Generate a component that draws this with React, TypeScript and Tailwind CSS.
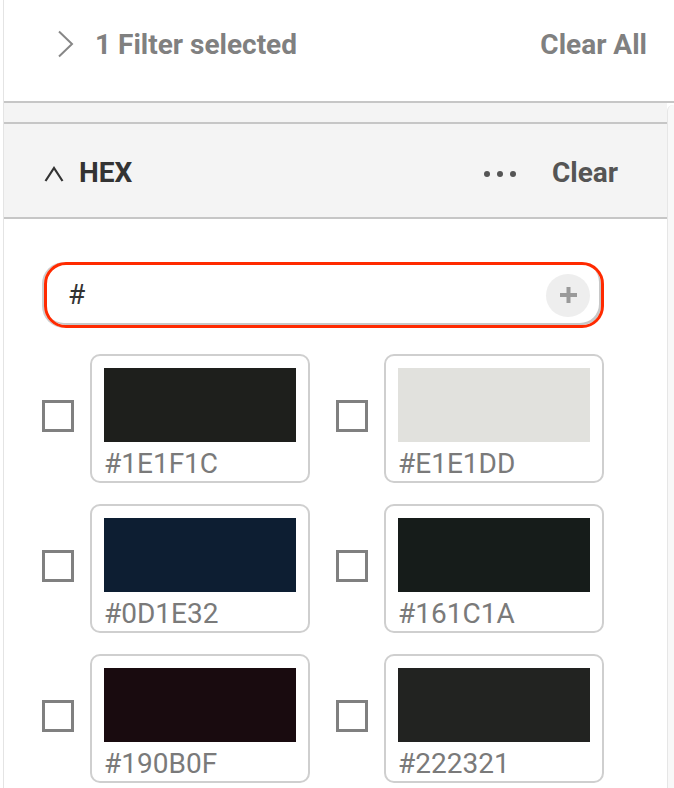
import React from 'react'

const SWATCHES = ['#1E1F1C', '#E1E1DD', '#0D1E32', '#161C1A', '#190B0F', '#222321']

const SWATCH_BG: Record<string, string> = {
  '#1E1F1C': 'bg-[#1E1F1C]',
  '#E1E1DD': 'bg-[#E1E1DD]',
  '#0D1E32': 'bg-[#0D1E32]',
  '#161C1A': 'bg-[#161C1A]',
  '#190B0F': 'bg-[#190B0F]',
  '#222321': 'bg-[#222321]',
}

function Swatch({ hex }: { hex: string }) {
  return (
    <div className="flex items-center">
      <div className="w-[32px] h-[32px] border-[3px] border-[#808080] shrink-0 mb-[6px]" />
      <div className="ml-[16px] w-[220px] h-[129px] border-2 border-[#cfcfcf] rounded-[10px] px-[12px] pt-[12px]">
        <div className={`w-[192px] h-[74px] ${SWATCH_BG[hex]}`} />
        <p className="mt-[8px] text-[28px] leading-[28px] text-[#7a7a7a]">{hex}</p>
      </div>
    </div>
  )
}

export default function App() {
  return (
    <div className="w-[674px] h-[788px] bg-white overflow-hidden pl-[3px] font-['Roboto',sans-serif]">
      <div className="h-full border-l border-[#e4e4e4] flex flex-col">
        {/* top bar */}
        <div className="h-[103px] shrink-0 border-b-2 border-[#c6c6c6] flex items-start justify-between pl-[53px] pr-[27px] pt-[31px]">
          <div className="flex items-center">
            <svg width="18" height="28" viewBox="0 0 18 28" className="mt-[-2px]">
              <polyline points="2,1.5 15,14 2,26.5" fill="none" stroke="#878787" strokeWidth="2" />
            </svg>
            <span className="ml-[20px] text-[28px] leading-[28px] font-bold text-[#808080]">1 Filter selected</span>
          </div>
          <span className="text-[28px] leading-[28px] font-bold text-[#808080]">Clear All</span>
        </div>

        <div className="flex-1 flex">
          <div className="flex-1 flex flex-col">
            {/* gray gap */}
            <div className="h-[21px] bg-[#f4f4f4] border-b-2 border-[#c6c6c6]" />
            {/* HEX header */}
            <div className="h-[95px] bg-[#f4f4f4] border-b-2 border-[#c6c6c6] flex items-start justify-between pl-[40px] pr-[49px] pt-[35px]">
              <div className="flex items-center">
                <svg width="20" height="18" viewBox="0 0 20 18" className="mt-[2px]">
                  <polyline points="1.5,16 10,3 18.5,16" fill="none" stroke="#333" strokeWidth="2.2" />
                </svg>
                <span className="ml-[15px] text-[28px] leading-[28px] font-bold text-[#333]">HEX</span>
              </div>
              <div className="flex items-center">
                <div className="flex items-center gap-[7px] mt-[2px]">
                  <span className="w-[6px] h-[6px] rounded-full bg-[#555]" />
                  <span className="w-[6px] h-[6px] rounded-full bg-[#555]" />
                  <span className="w-[6px] h-[6px] rounded-full bg-[#555]" />
                </div>
                <span className="ml-[36px] text-[28px] leading-[28px] font-bold text-[#555]">Clear</span>
              </div>
            </div>

            {/* body */}
            <div className="flex-1 pl-[38px] pt-[43px]">
              <div className="ml-[2px] w-[560px] h-[66px] border-[3px] border-[#ff2a00] rounded-[22px] shadow-[-2px_0_0_#cdcdcd,inset_-2px_-2px_0_#c8c8c8] flex items-center justify-between pl-[21px] pr-[11px]">
                <span className="text-[28px] leading-[28px] text-[#333]">#</span>
                <div className="w-[44px] h-[43px] rounded-full bg-[#eeeeee] flex items-center justify-center">
                  <svg width="17" height="16" viewBox="0 0 17 16">
                    <rect x="6.5" y="0" width="4" height="16" fill="#9a9a9a" />
                    <rect x="0" y="6" width="17" height="4" fill="#9a9a9a" />
                  </svg>
                </div>
              </div>

              <div className="mt-[26px] grid grid-cols-[268px_268px] gap-x-[26px] gap-y-[21px]">
                {SWATCHES.map(hex => (
                  <Swatch key={hex} hex={hex} />
                ))}
              </div>
            </div>
          </div>
          {/* scrollbar track */}
          <div className="w-[7px] mt-[2px] bg-[#f8f8f8] border-l border-[#e6e6e6] rounded-tl-[6px]" />
        </div>
      </div>
    </div>
  )
}
